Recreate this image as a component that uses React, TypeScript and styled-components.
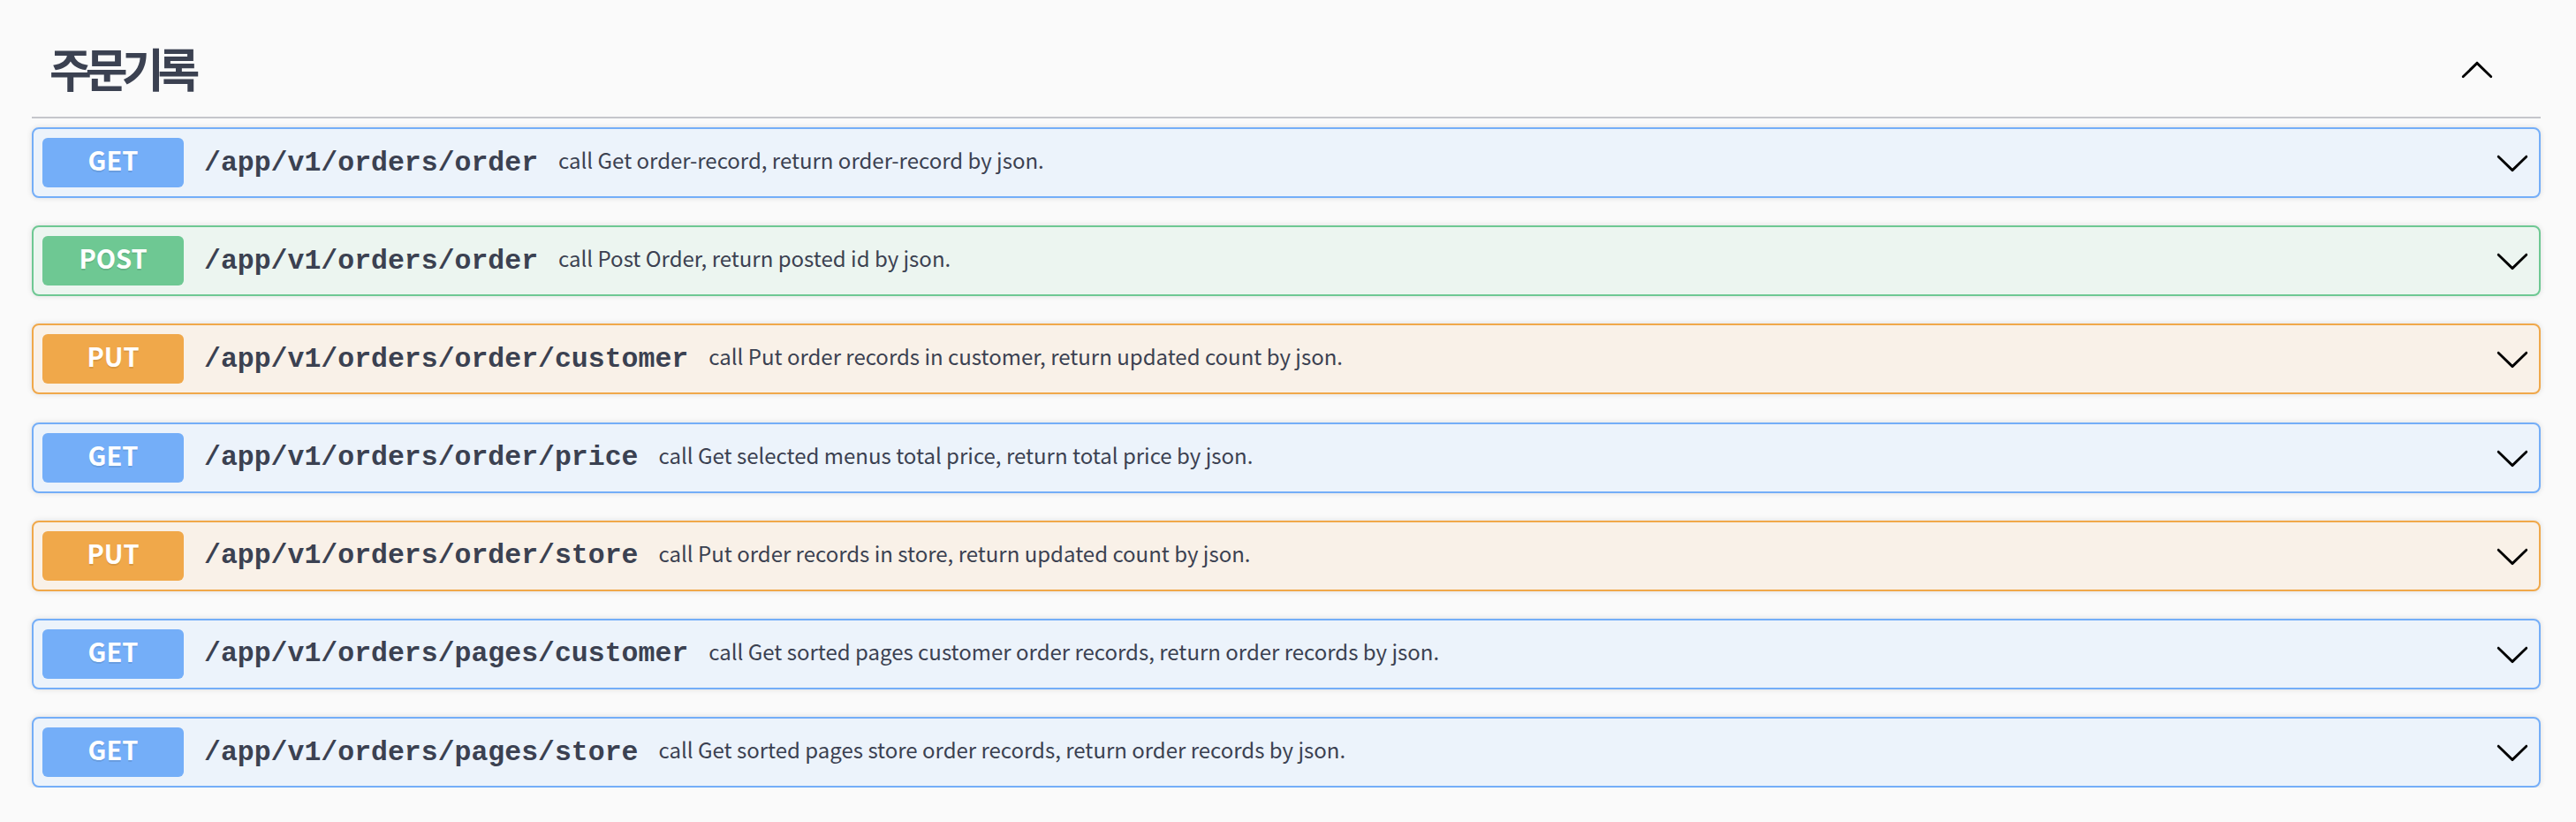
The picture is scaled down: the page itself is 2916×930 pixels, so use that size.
import styled, { createGlobalStyle } from 'styled-components';

type Method = 'GET' | 'POST' | 'PUT';

type Operation = {
  method: Method;
  path: string;
  summary: string;
};

const methodColors: Record<Method, { main: string; bg: string }> = {
  GET: { main: '#74aef8', bg: '#ecf3fb' },
  POST: { main: '#6ec893', bg: '#ecf5f0' },
  PUT: { main: '#f0a84a', bg: '#f9f1e8' },
};

const operations: Operation[] = [
  { method: 'GET', path: '/app/v1/orders/order', summary: 'call Get order-record, return order-record by json.' },
  { method: 'POST', path: '/app/v1/orders/order', summary: 'call Post Order, return posted id by json.' },
  { method: 'PUT', path: '/app/v1/orders/order/customer', summary: 'call Put order records in customer, return updated count by json.' },
  { method: 'GET', path: '/app/v1/orders/order/price', summary: 'call Get selected menus total price, return total price by json.' },
  { method: 'PUT', path: '/app/v1/orders/order/store', summary: 'call Put order records in store, return updated count by json.' },
  { method: 'GET', path: '/app/v1/orders/pages/customer', summary: 'call Get sorted pages customer order records, return order records by json.' },
  { method: 'GET', path: '/app/v1/orders/pages/store', summary: 'call Get sorted pages store order records, return order records by json.' },
];

const GlobalStyle = createGlobalStyle`
  body {
    margin: 0;
    background: #fafafa;
    font-family: "Noto Sans CJK KR", "Noto Sans", sans-serif;
    color: #3b4151;
  }
`;

const Page = styled.div`
  padding: 0 40px 0 36px;
`;

const TagHeader = styled.div`
  box-sizing: border-box;
  display: flex;
  align-items: center;
  height: 134px;
  padding: 27px 52px 0 20px;
  border-bottom: 2px solid #c5c6cb;
`;

const TagTitle = styled.h3`
  flex: 1;
  margin: 0;
  padding-bottom: 5px;
  font-family: "Noto Sans CJK KR", sans-serif;
  font-size: 52px;
  font-weight: 700;
  line-height: 1;
  letter-spacing: -7px;
  color: #3b4151;
`;

const Arrow = styled.svg<{ $up?: boolean }>`
  flex: none;
  width: 40px;
  height: 40px;
  fill: #000;
  transform: ${({ $up }) => ($up ? 'rotate(180deg)' : 'none')};
`;

const OpList = styled.div`
  display: flex;
  flex-direction: column;
  gap: 31.2px;
  padding-top: 10px;
`;

const OpBlock = styled.div<{ $method: Method }>`
  box-sizing: border-box;
  display: flex;
  align-items: center;
  height: 80px;
  padding: 0 10px;
  border: 2px solid ${({ $method }) => methodColors[$method].main};
  border-radius: 8px;
  background: ${({ $method }) => methodColors[$method].bg};
  box-shadow: 0 0 6px rgba(0, 0, 0, 0.12);
`;

const MethodBadge = styled.span<{ $method: Method }>`
  box-sizing: border-box;
  flex: none;
  display: flex;
  align-items: center;
  justify-content: center;
  width: 160px;
  height: 56px;
  padding-bottom: 8px;
  border-radius: 6px;
  background: ${({ $method }) => methodColors[$method].main};
  color: #fff;
  font-family: "Noto Sans CJK KR", sans-serif;
  font-size: 29px;
  font-weight: 700;
  text-shadow: 0 2px 0 rgba(0, 0, 0, 0.1);
`;

const PathText = styled.span`
  flex: none;
  margin-left: 23px;
  font-family: "Liberation Mono", monospace;
  font-size: 31.5px;
  font-weight: 700;
  color: #3b4151;
`;

const Summary = styled.span`
  flex: 1;
  margin-left: 23px;
  padding-bottom: 7px;
  font-family: "Noto Sans CJK KR", sans-serif;
  font-size: 24px;
  color: #3b4151;
  white-space: nowrap;
`;

function ArrowIcon({ up }: { up?: boolean }) {
  return (
    <Arrow $up={up} viewBox="0 0 20 20" aria-hidden="true">
      <path d="M17.418 6.109c.272-.268.709-.268.979 0s.271.701 0 .969l-7.908 7.83c-.27.268-.707.268-.979 0l-7.908-7.83c-.27-.268-.27-.701 0-.969.271-.268.709-.268.979 0L10 13.25l7.418-7.141z" />
    </Arrow>
  );
}

export default function App() {
  return (
    <>
      <GlobalStyle />
      <Page>
        <TagHeader>
          <TagTitle>주문기록</TagTitle>
          <ArrowIcon up />
        </TagHeader>
        <OpList>
          {operations.map((op, i) => (
            <OpBlock key={i} $method={op.method}>
              <MethodBadge $method={op.method}>{op.method}</MethodBadge>
              <PathText>{op.path}</PathText>
              <Summary>{op.summary}</Summary>
              <ArrowIcon />
            </OpBlock>
          ))}
        </OpList>
      </Page>
    </>
  );
}
